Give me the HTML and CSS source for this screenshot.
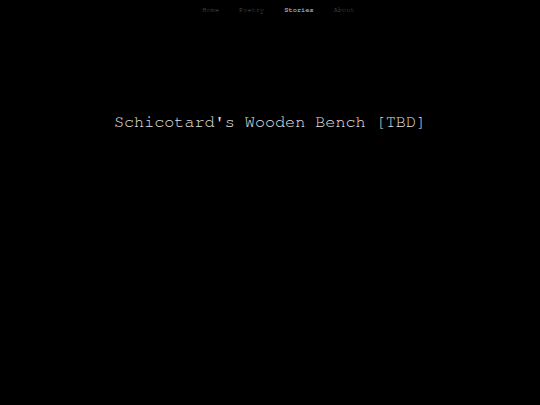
FILE: index.html
```html
<!DOCTYPE html>
<html>
<head>
<meta charset="utf-8">
<link rel="stylesheet" href="styles.css">
</head>
<body>
<nav class="nav">
  <a class="nav-link">Home</a>
  <a class="nav-link">Poetry</a>
  <a class="nav-link active">Stories</a>
  <a class="nav-link">About</a>
</nav>
<main class="main">
  <h1 class="title">Schicotard's Wooden Bench [TBD]</h1>
</main>
</body>
</html>
```
FILE: styles.css
```css
html, body {
  margin: 0;
  padding: 0;
  background: #000;
  height: 100%;
}
body {
  font-family: "Nimbus Mono PS", "Nimbus Mono L", "FreeMono", "Courier", "Liberation Mono", monospace;
}
.nav {
  display: flex;
  justify-content: center;
  gap: 20px;
  padding-top: 5px;
  padding-left: 17px;
  height: 10px;
  font-size: 7px;
  line-height: 9px;
}
.nav-link {
  color: #5a5a5a;
}
.nav-link.active {
  color: #a0a0a0;
  font-weight: bold;
}
.main {
  display: flex;
  justify-content: center;
  padding-top: 97px;
}
.title {
  margin: 0;
  font-weight: normal;
  font-size: 16.8px;
  line-height: 20px;
  color: #e0e0e0;
}
```
